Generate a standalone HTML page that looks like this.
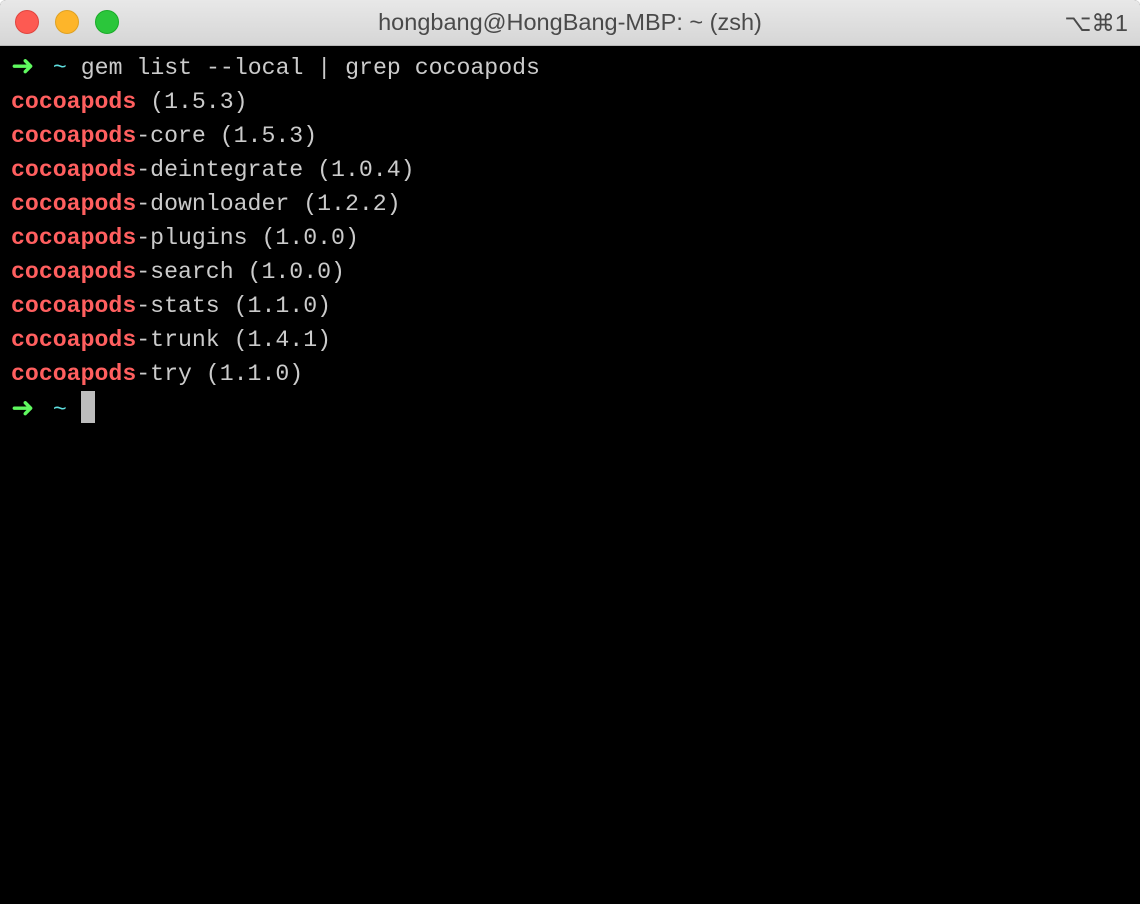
<!DOCTYPE html>
<html><head><style>
html,body{margin:0;padding:0;width:1140px;height:904px;overflow:hidden;background:#fff}
.win{position:absolute;left:0;top:0;width:1140px;height:904px;background:#000;border-radius:6px 6px 0 0;overflow:hidden}
.title{position:absolute;left:0;top:0;width:1140px;height:45px;background:linear-gradient(#e8e8e8,#d6d6d6);border-bottom:1px solid #b8b8b8;font-family:"Liberation Sans",sans-serif;font-size:23.5px;color:#4a4a4a}
.t{position:absolute;left:0;width:1140px;top:9px;text-align:center}
.k{position:absolute;right:12px;top:9px}
.dot{position:absolute;top:10px;width:24px;height:24px;border-radius:50%}
.term{position:absolute;left:11px;top:51px;font-family:"Liberation Mono",monospace;font-size:23.2px;line-height:34px;color:#cbcbcb;white-space:pre}
.r{color:#ff5f5f;font-weight:bold}
.g{color:#5ff95f;font-weight:bold}
.a{display:inline-block;width:28px;font-size:28px;line-height:20px;color:#5ff95f;font-weight:bold;font-family:"DejaVu Sans",sans-serif;vertical-align:-1px}
.c{color:#5fe0e0}
.cur{display:inline-block;width:14px;height:32px;background:#bdbdbd;vertical-align:-7px}
</style></head><body>
<div class="win">
<div class="title">
<div class="dot" style="left:15px;background:#fd5a52;border:1px solid #e0443e;width:22px;height:22px"></div>
<div class="dot" style="left:55px;background:#fdb52a;border:1px solid #dea123;width:22px;height:22px"></div>
<div class="dot" style="left:95px;background:#2bc63b;border:1px solid #1aab29;width:22px;height:22px"></div>
<div class="t">hongbang@HongBang-MBP: ~ (zsh)</div>
<div class="k">⌥⌘1</div>
</div>
<div class="term"><span class="a">➜</span> <span class="c">~</span> gem list --local | grep cocoapods
<span class="r">cocoapods</span> (1.5.3)
<span class="r">cocoapods</span>-core (1.5.3)
<span class="r">cocoapods</span>-deintegrate (1.0.4)
<span class="r">cocoapods</span>-downloader (1.2.2)
<span class="r">cocoapods</span>-plugins (1.0.0)
<span class="r">cocoapods</span>-search (1.0.0)
<span class="r">cocoapods</span>-stats (1.1.0)
<span class="r">cocoapods</span>-trunk (1.4.1)
<span class="r">cocoapods</span>-try (1.1.0)
<span class="a">➜</span> <span class="c">~</span> <span class="cur"></span></div>
</div>
</body></html>
